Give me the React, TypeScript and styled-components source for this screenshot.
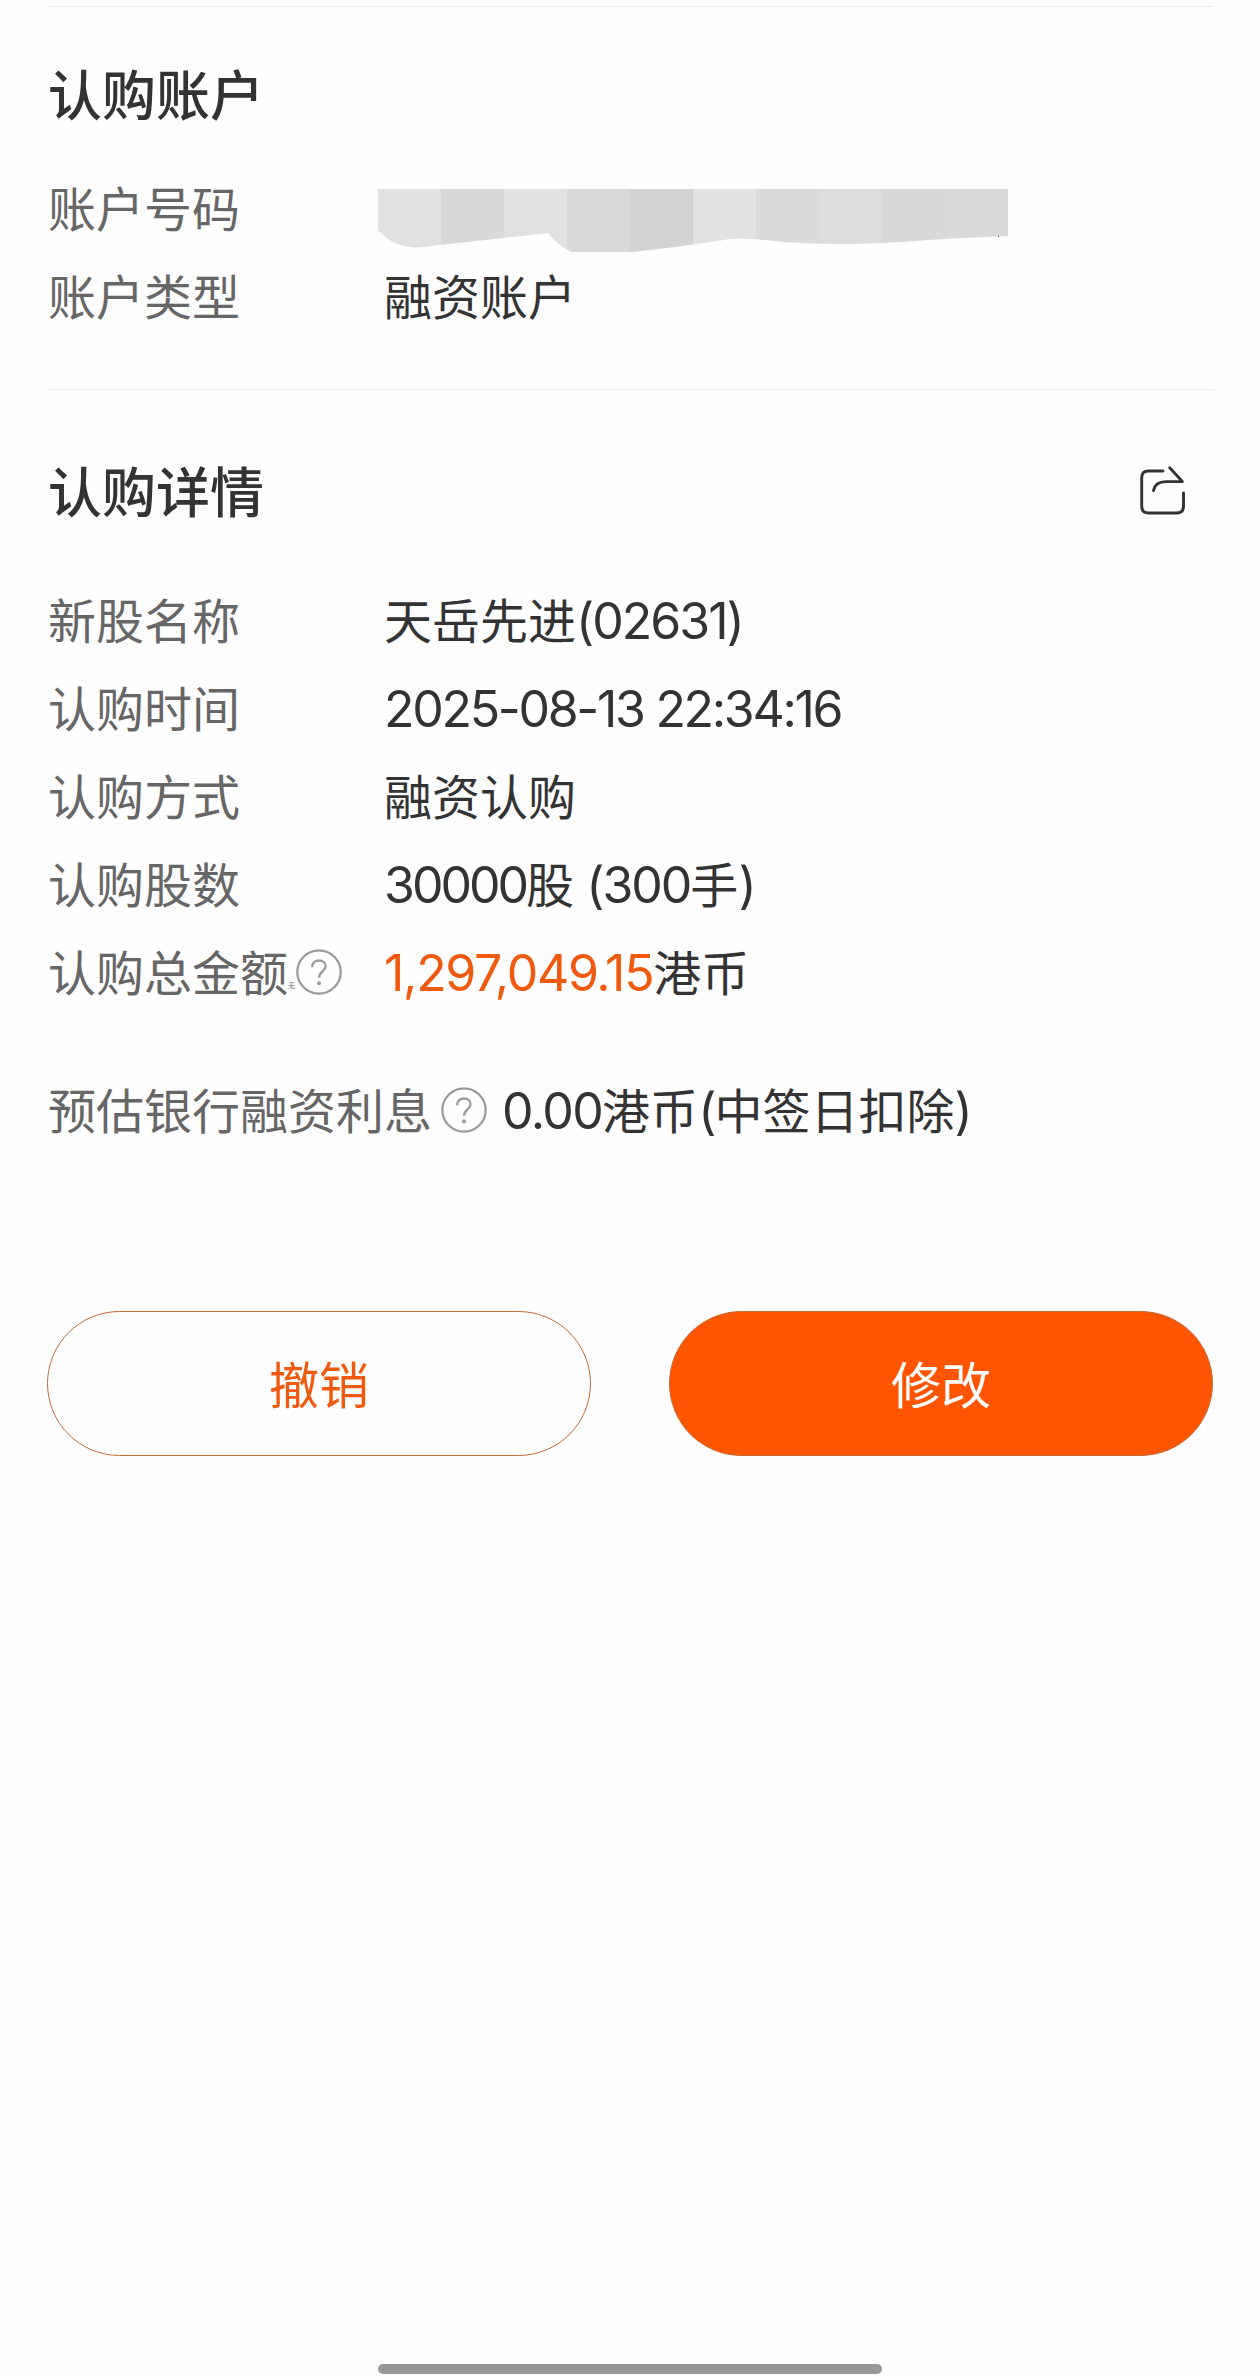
import React from 'react';
import styled, { createGlobalStyle } from 'styled-components';

const GlobalStyle = createGlobalStyle`
    * {
        box-sizing: border-box;
    }

    body {
        margin: 0;
        background: #fefefe;
    }
`;

const StyledPage = styled.div`
    display: flex;
    flex-direction: column;
    width: 1260px;
    height: 2376px;
    padding: 6px 47px 2px;
    color: #333;
    font-family: 'Noto Sans CJK SC', sans-serif;
    font-size: 48px;
    line-height: 88px;
    white-space: nowrap;
`;

const StyledSection = styled.section<{ $height: number }>`
    height: ${({ $height }) => $height}px;
    border-top: 1px solid #ebebeb;
`;

const StyledHeader = styled.div<{ $top: number; $bottom: number }>`
    display: flex;
    align-items: center;
    justify-content: space-between;
    height: 88px;
    margin: ${({ $top, $bottom }) => `${$top}px 0 ${$bottom}px`};
    padding: 0 27px 0 1px;
`;

const StyledTitle = styled.h2`
    margin: 0;
    font-size: 54px;
    font-weight: 500;
    line-height: 88px;
`;

const StyledRow = styled.div<{ $top?: number }>`
    display: flex;
    height: 88px;
    margin-top: ${({ $top = 0 }) => $top}px;
    padding-left: 1px;
`;

const StyledLabel = styled.div<{ $width?: number }>`
    display: flex;
    flex-shrink: 0;
    align-items: center;
    width: ${({ $width = 336 }) => $width}px;
    color: #666;
`;

const StyledTiny = styled.span`
    width: 8px;
    margin-top: 30px;
    font-size: 7px;
    line-height: 10px;
`;

const StyledHelp = styled.svg<{ $left?: number }>`
    margin: 3px 0 0 ${({ $left = 0 }) => $left}px;
`;

const StyledNumber = styled.span<{ $spacing?: number; $accent?: boolean }>`
    color: ${({ $accent }) => ($accent ? '#f05a0e' : 'inherit')};
    font-family: Inter, sans-serif;
    font-size: 50px;
    letter-spacing: ${({ $spacing = -2 }) => $spacing}px;
    line-height: 1;
`;

const StyledMosaic = styled.svg`
    margin: 27px 0 0 -6px;
`;

const StyledActions = styled.div`
    display: flex;
    gap: 78px;
    margin-top: 156px;
`;

const StyledButton = styled.button<{ $primary?: boolean }>`
    width: 544px;
    height: 145px;
    padding: 0 0 4px;
    border: 1px solid #c06a34;
    border-radius: 73px;
    background: ${({ $primary }) => ($primary ? '#ff5500' : 'transparent')};
    color: ${({ $primary }) => ($primary ? '#fff' : '#f05a0e')};
    font-family: inherit;
    font-size: 50px;
`;

const StyledHomeBar = styled.div`
    width: 504px;
    height: 10px;
    margin: auto auto 0;
    border-radius: 5px;
    background: #999;
`;

const MOSAIC_COLORS = [
    '#e1e1e1', '#d8d8d8', '#e1e1e1', '#d9d9d9', '#d3d3d3',
    '#e2e2e2', '#dadada', '#dddddd', '#d8d8d8', '#d9d9d9',
];

function HelpIcon({ left }: { left?: number }) {
    return (
        <StyledHelp $left={left} width='46' height='46' viewBox='0 0 46 46' fill='none'>
            <circle cx='23' cy='23' r='21.7' stroke='#999' strokeWidth='2.2' />
            <path
                d='M16.2 18.2C16.2 13.8 19 11.5 23 11.5C27 11.5 29.6 13.9 29.6 17.2C29.6 22.2 23 22.8 23 28.8'
                stroke='#999'
                strokeWidth='2.3'
            />
            <circle cx='23' cy='34.3' r='2' fill='#999' />
        </StyledHelp>
    );
}

function ShareIcon() {
    return (
        <svg width='46' height='52' viewBox='0 0 46 52' fill='none' stroke='#333' strokeWidth='2.9' strokeLinecap='round'>
            <path d='M23 7H8.5Q1.7 7 1.7 13.8V42.2Q1.7 49 8.5 49H36.7Q43.5 49 43.5 42.2V29' />
            <path d='M29.7 3.8L42.3 17.6H26C18.5 17.6 14.5 20.5 13.5 26.5' strokeLinejoin='round' />
        </svg>
    );
}

/**
 * @description 가려진 계좌번호
 */
function MaskedNumber() {
    return (
        <StyledMosaic width='630' height='64' viewBox='0 0 630 64'>
            <clipPath id='mask'>
                <path d='M0 0H630V47Q590 48.5 550 51Q470 58 405 53Q362 48 352 50Q310 57 255 63H194Q180 57 170 44L44 58Q18 61 0 41Z' />
            </clipPath>
            <g clipPath='url(#mask)'>
                {MOSAIC_COLORS.map((color, i) => (
                    <rect key={i} x={i * 63} width='63' height='64' fill={color} />
                ))}
            </g>
            <rect x='620' y='47' width='1' height='1' fill='#333' />
        </StyledMosaic>
    );
}

function App() {
    return (
        <StyledPage>
            <GlobalStyle />
            <StyledSection $height={383}>
                <StyledHeader $top={42} $bottom={25}>
                    <StyledTitle>认购账户</StyledTitle>
                </StyledHeader>
                <StyledRow>
                    <StyledLabel>账户号码</StyledLabel>
                    <MaskedNumber />
                </StyledRow>
                <StyledRow>
                    <StyledLabel>账户类型</StyledLabel>
                    <div>融资账户</div>
                </StyledRow>
            </StyledSection>
            <StyledSection $height={766}>
                <StyledHeader $top={56} $bottom={40}>
                    <StyledTitle>认购详情</StyledTitle>
                    <ShareIcon />
                </StyledHeader>
                <StyledRow>
                    <StyledLabel>新股名称</StyledLabel>
                    <div>天岳先进<StyledNumber>(02631)</StyledNumber></div>
                </StyledRow>
                <StyledRow>
                    <StyledLabel>认购时间</StyledLabel>
                    <div><StyledNumber $spacing={-2.3}>2025-08-13 22:34:16</StyledNumber></div>
                </StyledRow>
                <StyledRow>
                    <StyledLabel>认购方式</StyledLabel>
                    <div>融资认购</div>
                </StyledRow>
                <StyledRow>
                    <StyledLabel>认购股数</StyledLabel>
                    <div>
                        <StyledNumber $spacing={-3}>30000</StyledNumber>股
                        <StyledNumber> (300</StyledNumber>手<StyledNumber>)</StyledNumber>
                    </div>
                </StyledRow>
                <StyledRow>
                    <StyledLabel>
                        认购总金额<StyledTiny>无</StyledTiny>
                        <HelpIcon />
                    </StyledLabel>
                    <div><StyledNumber $accent $spacing={-1.3}>1,297,049.15</StyledNumber>港币</div>
                </StyledRow>
                <StyledRow $top={50}>
                    <StyledLabel $width={454}>
                        预估银行融资利息
                        <HelpIcon left={9} />
                    </StyledLabel>
                    <div>
                        <StyledNumber $spacing={-1.6}>0.00</StyledNumber>港币
                        <StyledNumber>(</StyledNumber>中签日扣除<StyledNumber>)</StyledNumber>
                    </div>
                </StyledRow>
            </StyledSection>
            <StyledActions>
                <StyledButton>撤销</StyledButton>
                <StyledButton $primary>修改</StyledButton>
            </StyledActions>
            <StyledHomeBar />
        </StyledPage>
    );
}

export default App;
